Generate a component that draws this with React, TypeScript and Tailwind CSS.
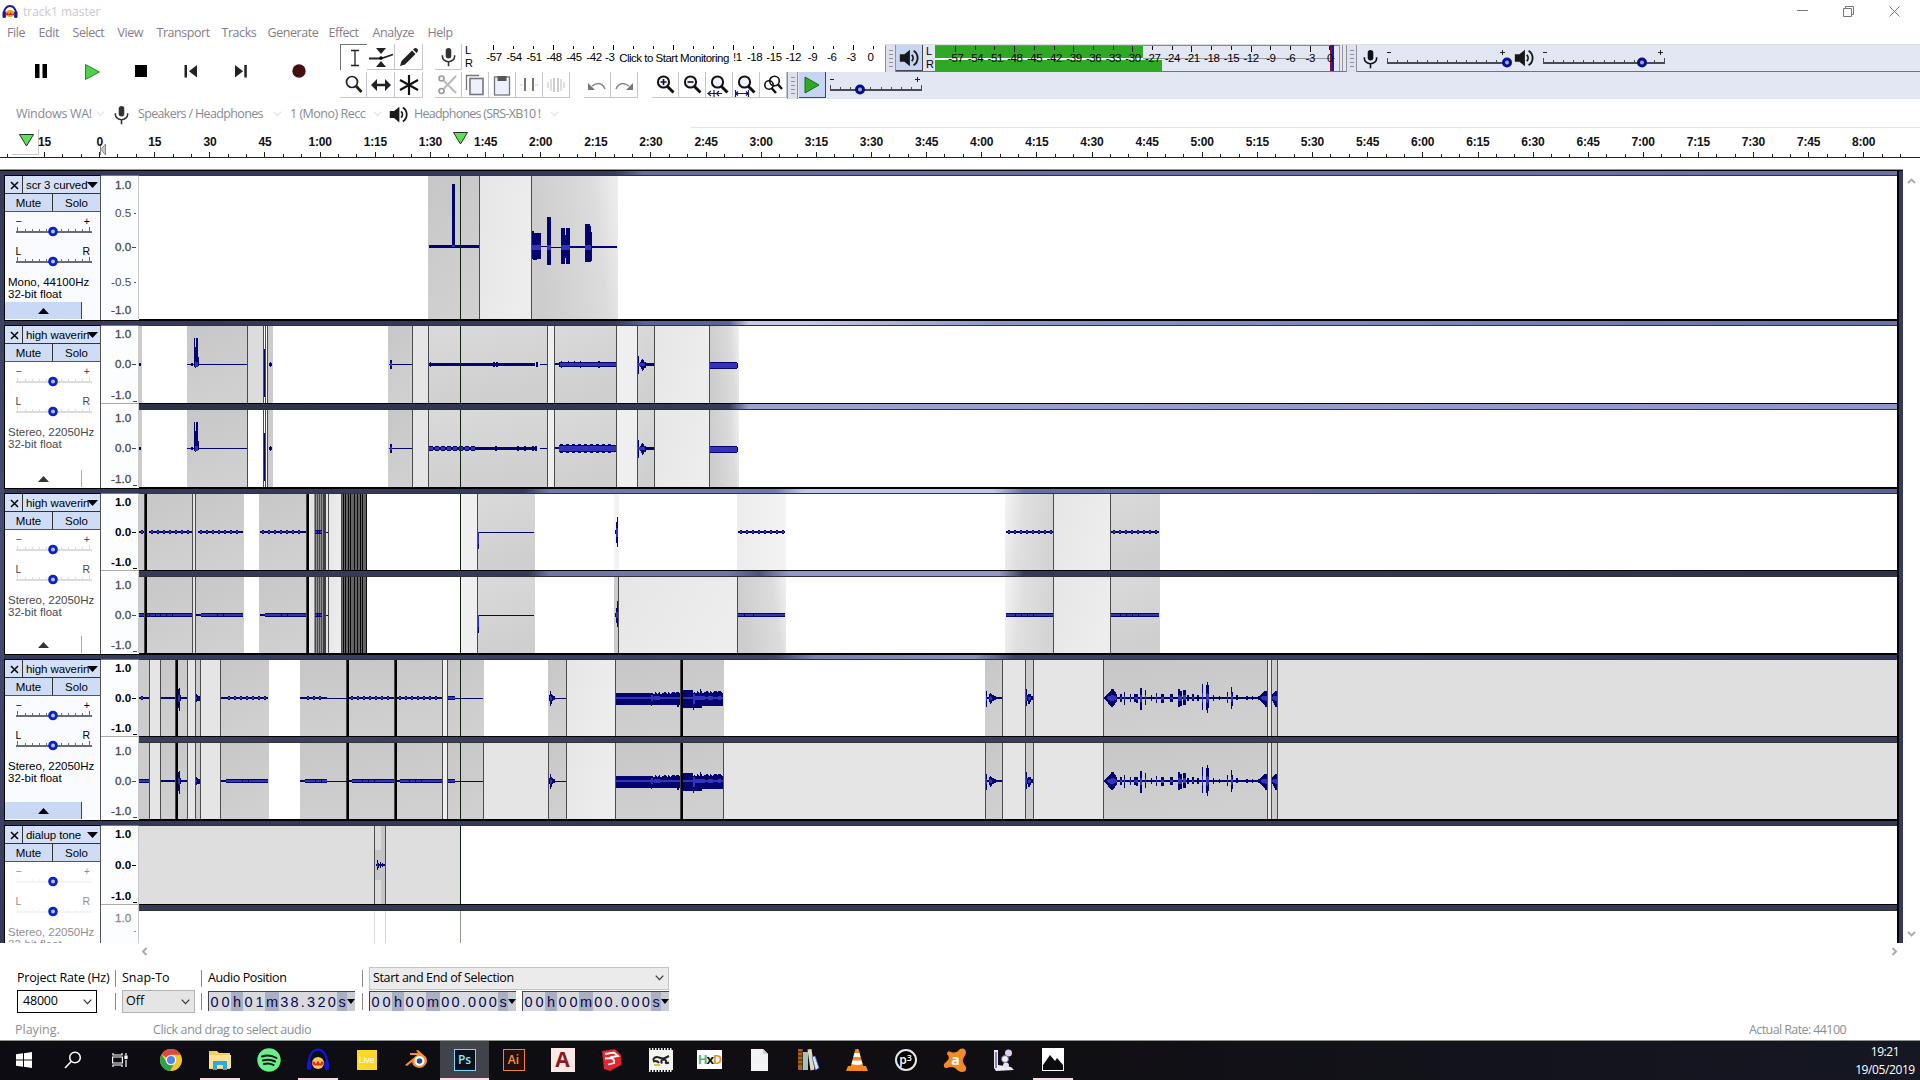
import React from "react";

type Clip = [number, number, string];
type Bar = [number, number, number, number];
interface Wave {
  dark: Bar[];
  rms: Bar[];
}
interface ChannelData {
  h: number;
  c: number;
  clips: Clip[];
  lines: number[];
  black?: number[];
  thick?: number[];
  wave: Wave;
  bold?: boolean;
  faint?: boolean;
  head?: string;
}

const D = "#cccccc";
const L = "#e5e5e5";
const XL = "#efefef";
const LEFT = 139;
const WIDTH = 1758;

/* ---------- waveform builders: y values are relative to the zero line ---------- */
const w = (dark: Bar[] = [], rms: Bar[] = []): Wave => ({ dark, rms });
const join = (...ws: Wave[]): Wave => ({
  dark: ws.flatMap((a) => a.dark),
  rms: ws.flatMap((a) => a.rms),
});
const flat = (x0: number, x1: number, h = 1): Wave => w([[x0, x1, -Math.floor(h / 2), Math.ceil(h / 2)]]);
const beads = (x0: number, x1: number, period = 6): Wave => {
  const out: Wave = flat(x0, x1, 2);
  for (let x = x0 + 2; x < x1 - 2; x += period) {
    out.dark.push([x, x + 2, -2, 2]);
    out.rms.push([x, x + 2, -1, 1]);
  }
  return out;
};
const band = (x0: number, x1: number, up: number, down: number): Wave =>
  w([[x0, x1, -up, down]], [[x0, x1, -up + 1, down - 1]]);
const segBand = (x0: number, x1: number, cuts: number[]): Wave => {
  const b = band(x0, x1, 2, 2);
  cuts.forEach((c) => b.dark.push([c, c + 1, -2, 2]));
  const rms: Bar[] = [];
  let s = x0;
  [...cuts, x1].forEach((c) => {
    rms.push([s, c, -1, 1]);
    s = c + 1;
  });
  return w(b.dark, rms);
};
const spikes = (list: [number, number, number, number][]): Wave => ({
  dark: list.map(([x, wd, u, d]) => [x, x + wd, -u, d] as Bar),
  rms: list.filter((s) => s[2] > 3).map(([x, wd, u, d]) => [x, x + wd, -u / 3, d / 3] as Bar),
});

const voice: Wave = join(
  flat(1104, 1267, 2),
  spikes([
    [1105, 1, 2, 2], [1106, 1, 3, 3], [1107, 1, 4, 4], [1108, 1, 5, 6], [1109, 1, 6, 7], [1110, 1, 7, 8], [1111, 2, 9, 9],
    [1113, 1, 9, 8], [1114, 1, 7, 7], [1115, 1, 6, 5], [1116, 1, 4, 4], [1120, 2, 4, 4], [1124, 1, 6, 7], [1130, 1, 4, 4],
    [1134, 2, 4, 4], [1136, 2, 4, 5], [1140, 2, 10, 12], [1145, 1, 8, 7], [1151, 1, 3, 3], [1156, 1, 5, 5], [1161, 3, 4, 5],
    [1170, 3, 4, 4], [1178, 2, 9, 9], [1180, 2, 7, 8], [1183, 3, 8, 7], [1187, 2, 3, 3], [1192, 2, 4, 3], [1197, 2, 3, 3],
    [1202, 1, 14, 12], [1206, 2, 13, 12], [1207, 1, 16, 15], [1208, 1, 13, 10], [1213, 1, 3, 3], [1219, 1, 2, 2],
    [1227, 1, 6, 5], [1231, 1, 11, 11], [1232, 1, 6, 8], [1236, 2, 3, 2], [1246, 2, 2, 2], [1252, 1, 2, 2],
    [1258, 2, 2, 2], [1260, 1, 3, 3], [1261, 1, 4, 4], [1262, 1, 5, 5], [1263, 1, 6, 6], [1264, 1, 7, 7], [1265, 2, 7, 9],
    [1272, 1, 4, 3], [1273, 1, 5, 5], [1274, 1, 6, 7], [1275, 2, 7, 9],
  ])
);
const chirp = (x: number): Wave =>
  join(flat(x, x + 16, 2), spikes([[x, 1, 7, 9], [x + 3, 1, 4, 4], [x + 4, 1, 5, 6], [x + 5, 1, 4, 5], [x + 6, 2, 3, 3], [x + 8, 2, 2, 2]]));

const jitter = [0, 1, 0, 0, 2, 1, 0, 1, 2, 0, 0, 1, 1, 2, 3, 1, 0, 2, 1, 0, 1, 2, 2, 3, 1, 2, 3, 3, 1, 0];
const loud: Wave = join(
  w(
    [[616, 651, -5, 7], [651, 680, -4, 7], [683, 693, -8, 10], [693, 702, -5, 10], [702, 723, -5, 8], [693, 694, -5, 12], [700, 701, -9, 8], [697, 698, -7, 8], [651, 652, -5, 8], [677, 679, -5, 9]],
    [[616, 680, -1, 1], [683, 723, -1, 1], [651, 653, -3, 3], [654, 660, -2, 2], [693, 695, -4, 6], [695, 705, -2, 2], [708, 713, -2, 2], [718, 721, -2, 2]]
  ),
  w(jitter.map((j, i) => [651 + i, Math.min(652 + i, 680), -4 - Math.min(j, 2), 0] as Bar)),
  w(jitter.map((j, i) => [693 + i, 694 + i, -5 - Math.min(j, 2), 0] as Bar))
);

/* ---------- track 1 ---------- */
const t1: ChannelData = {
  h: 143, c: 71,
  clips: [[428, 479, "url(#dk)"], [480, 531, "url(#lt)"], [532, 618, "url(#fadeR)"]],
  lines: [479, 531],
  wave: w(
    [[429, 479, -2, 1], [452, 455, -63, 0], [532, 534, -16, 12], [534, 541, -14, 12], [533, 537, 11, 13], [541, 547, -1, 0], [547, 551, -30, 18],
      [551, 561, 0, 1], [561, 565, -19, 17], [565, 566, -12, 11], [566, 570, -19, 17], [570, 617, -1, 1], [585, 590, -23, 15], [590, 591, -21, 15], [591, 592, -15, 14]],
    [[452, 455, -2, 0], [532, 541, -2, 3], [547, 551, -2, 3], [561, 570, -2, 3], [585, 591, -2, 3]]
  ),
};

/* ---------- track 2 ---------- */
const t2clips: Clip[] = [
  [139, 142, D], [187, 247, "url(#dk)"], [268, 273, D], [388, 412, "url(#dk)"], [413, 428, L], [429, 547, "url(#dk2)"], [548, 554, XL], [555, 616, "url(#dk2)"],
  [617, 637, XL], [638, 654, "url(#dk2)"], [655, 709, "url(#lt)"], [710, 739, "url(#fadeR)"],
];
const t2lines = [247, 263, 265, 267, 412, 428, 547, 554, 616, 637, 654, 709];
const t2base: Wave = join(
  flat(139, 141, 3), flat(187, 247, 1),
  w([[194, 195, -26, 3], [195, 196, -17, 4], [196, 198, -26, 3], [198, 199, -7, 2], [191, 193, -1, 2], [264, 265, -15, 33], [269, 272, -1, 2], [270, 271, -2, 3]],
    [[195, 198, -2, 3]]),
  flat(389, 412, 1), w([[390, 392, -4, 5]], [[390, 392, -1, 2]]),
  flat(540, 547, 1), flat(555, 560, 2),
  w([[638, 639, -8, 10], [640, 641, -2, 3], [641, 642, -4, 5], [642, 643, -5, 7], [643, 644, -4, 6], [644, 646, -2, 4], [646, 654, -1, 2]], [[638, 645, -1, 2]]),
  w([[710, 737, -2, 5], [737, 738, -1, 4]], [[710, 737, -1, 4]])
);
const t2a: ChannelData = {
  h: 77, c: 38, clips: [...t2clips, [248, 263, "#dcdcdc"]], lines: t2lines,
  wave: join(t2base, flat(429, 535, 3), spikes([[430, 1, 2, 3], [493, 2, 2, 3], [496, 2, 2, 3], [536, 2, 2, 3]]),
    w([[559, 616, -2, 3], [561, 562, -3, 4], [568, 569, -3, 3], [574, 575, -3, 3], [580, 581, -3, 4], [598, 600, -3, 4]], [[560, 616, -1, 2]])),
};
const t2b: ChannelData = {
  h: 77, c: 38, clips: t2clips, lines: t2lines,
  wave: join(t2base, flat(429, 537, 3),
    w([0, 1, 2, 3, 4, 5, 6, 7].map((i) => [429 + i * 6, 433 + i * 6, -2, 3] as Bar), [0, 1, 2, 3, 4, 5, 6, 7].map((i) => [429 + i * 6, 433 + i * 6, -1, 2] as Bar)),
    spikes([[495, 2, 2, 3], [517, 2, 2, 3], [524, 2, 2, 3], [532, 2, 2, 3], [535, 2, 2, 3]]),
    w([[559, 616, -3, 4], ...[0, 1, 2, 3, 4, 5, 6, 7, 8].map((i) => [560 + i * 6, 563 + i * 6, -4, 5] as Bar)], [[559, 616, -2, 3]])),
};

/* ---------- track 3 ---------- */
const dense: Clip[] = [
  [309, 314, L], [314, 326, "#8f8f8f"], [323, 326, "#3f3f3f"], [326, 329, L], [329, 341, "url(#lt)"], [341, 367, "#646464"],
];
const denseLines = [192, 195, 315, 317, 319, 321, 328, 341];
const denseBlack = [343, 345, 348, 350, 354, 357, 360, 362, 366];
const t3left: Clip[] = [[139, 145, D], [147, 193, "url(#dk)"], [193, 196, L], [196, 244, "url(#dk)"], [259, 307, "url(#dk)"], ...dense];
const t3right: Clip[] = [[461, 477, XL], [478, 535, "url(#dk2)"], [1005, 1053, "url(#fadeL)"], [1054, 1110, "url(#lt)"], [1111, 1160, "url(#dk2)"]];
const t3a: ChannelData = {
  h: 76, c: 38, bold: true, clips: [...t3left, ...t3right, [614, 619, "#f2f2f2"], [737, 786, "url(#pale)"]],
  lines: [...denseLines, 477, 1053, 1110], thick: [145, 307], black: denseBlack,
  wave: join(beads(139, 144), beads(149, 192), beads(198, 243), beads(260, 306), segBand(315, 322, [317, 319]), flat(326, 328, 1),
    flat(478, 534, 1), w([[478, 479, 0, 17]], [[478, 479, 0, 12]]), w([[615, 616, -2, 2], [616, 617, -10, 11], [617, 618, -15, 15]], [[616, 618, -4, 5]]),
    beads(738, 785), beads(1006, 1053), beads(1111, 1159)),
};
const t3b: ChannelData = {
  h: 76, c: 38, clips: [...t3left, ...t3right, [614, 618, D], [619, 737, "url(#lt)"], [738, 786, "url(#fadeR)"]],
  lines: [...denseLines, 477, 618, 737, 1053, 1110], thick: [145, 307], black: denseBlack,
  wave: join(segBand(139, 144, []), segBand(147, 192, [149, 155, 160, 166, 172]), flat(196, 201, 2), segBand(201, 243, [217, 223]), flat(260, 265, 2), segBand(265, 306, [281, 287]),
    segBand(315, 322, [317, 319]), flat(326, 328, 1), flat(478, 534, 1), w([[478, 479, 0, 18]], [[478, 479, 0, 12]]),
    w([[615, 616, -2, 2], [616, 617, -7, 8], [617, 618, -14, 12]], [[616, 618, -3, 3]]),
    segBand(738, 785, [744, 753]), segBand(1006, 1053, [1015, 1021, 1027, 1033]), segBand(1111, 1159, [1120, 1126, 1132, 1138])),
};

/* ---------- track 4 ---------- */
const t4clips: Clip[] = [
  [139, 149, D], [150, 160, L], [161, 187, "url(#dk)"], [188, 195, L], [196, 200, D], [201, 220, L], [221, 269, "url(#dk)"],
  [300, 442, "url(#dk)"], [443, 447, XL], [448, 484, "url(#dk)"], [548, 566, "url(#dk)"], [567, 615, "url(#lt)"], [616, 724, "url(#dk)"],
  [985, 1002, "url(#dk)"], [1003, 1025, L], [1026, 1033, D], [1034, 1103, L], [1104, 1267, "url(#dk)"], [1268, 1271, L], [1272, 1277, D], [1278, 1897, "#dfdfdf"],
];
const t4lines = [149, 160, 187, 195, 200, 220, 442, 447, 566, 615, 1002, 1025, 1033, 1103, 1267, 1271, 1277];
const t4thick = [176, 347, 395, 681];
const t4common: Wave = join(
  flat(161, 175, 2), flat(178, 187, 2), spikes([[178, 1, 9, 10], [179, 1, 10, 13], [180, 1, 3, 3], [196, 1, 4, 4], [197, 1, 3, 3], [198, 2, 2, 3]]),
  flat(327, 347, 1), segBand(448, 455, []), flat(455, 483, 1), flat(549, 566, 1),
  spikes([[549, 1, 3, 3], [550, 1, 7, 8], [551, 1, 4, 6], [552, 1, 3, 3], [553, 2, 2, 2]]),
  loud, chirp(986), spikes([[1026, 1, 9, 8], [1027, 1, 3, 3], [1028, 2, 4, 6], [1030, 1, 4, 4], [1031, 2, 2, 2]]), voice
);
const t4a: ChannelData = {
  h: 76, c: 38, bold: true, clips: t4clips, lines: t4lines, thick: t4thick,
  wave: join(t4common, beads(139, 149), beads(226, 268), flat(221, 227, 2), beads(305, 327), flat(300, 306, 2), beads(349, 394), beads(397, 442)),
};
const t4b: ChannelData = {
  h: 76, c: 38, clips: [...t4clips, [484, 548, "#e5e5e5"], [724, 985, "#e5e5e5"]], lines: [...t4lines, 483, 548, 723, 985], thick: t4thick,
  wave: join(t4common, segBand(139, 149, []), segBand(226, 268, [242, 248]), flat(221, 227, 2), segBand(305, 327, [315, 321]), flat(300, 306, 2),
    flat(349, 353, 2), segBand(352, 394, [362, 368, 374]), flat(397, 400, 2), segBand(400, 442, [409, 415, 421])),
};

/* ---------- track 5 ---------- */
const t5a: ChannelData = {
  h: 78, c: 39, bold: true,
  clips: [[139, 374, "#dedede"], [375, 381, "#dadada"], [381, 385, "#c4c4c4"], [375, 381, "mid"], [386, 461, "#dedede"]],
  lines: [374, 385],
  wave: join(flat(376, 385, 2), spikes([[377, 1, 5, 5], [378, 1, 2, 3], [380, 1, 3, 3], [382, 1, 2, 2]])),
};
const t5b: ChannelData = { h: 32, c: 39, faint: true, clips: [[374, 375, "#dddddd"], [385, 386, "#d4d4d4"]], lines: [], wave: w(), head: "#8b9a8b" };

function barsToPath(bars: Bar[]) {
  return bars.map(([x0, x1, y0, y1]) => `M${x0} ${y0}H${x1}V${y1}H${x0}Z`).join("");
}

function Channel({ d }: { d: ChannelData }) {
  const top = -d.c;
  return (
    <svg width={WIDTH} height={d.h} viewBox={`${LEFT} ${top} ${WIDTH} ${d.h}`} shapeRendering="crispEdges" className="block bg-white">
      {d.clips.map(([a, b, fill], i) =>
        fill === "mid" ? (
          <rect key={i} x={a} y={-15} width={b - a} height={30} fill="#c6c6c6" />
        ) : (
          <rect key={i} x={a} y={top} width={b - a} height={d.h} fill={fill} />
        )
      )}
      {d.lines.map((x) => <rect key={x} x={x} y={top} width={1} height={d.h} fill="#4c4c4c" />)}
      {(d.black ?? []).map((x) => <rect key={x} x={x} y={top} width={1} height={d.h} fill="#0a0a0a" />)}
      {(d.thick ?? []).map((x) => (
        <g key={x}>
          <rect x={x - 1} y={top} width={3} height={d.h} fill="#444" />
          <rect x={x} y={top} width={2} height={d.h} fill="#000" />
        </g>
      ))}
      <path d={barsToPath(d.wave.dark)} fill="#04046e" />
      <path d={barsToPath(d.wave.rms)} fill="#3434b8" />
      <rect x={460} y={top} width={1} height={d.h} fill={d.head ?? "#0a2410"} />
    </svg>
  );
}

function Defs() {
  return (
    <svg width="0" height="0" className="absolute">
      <defs>
        <linearGradient id="dk" x1="0" y1="0" x2="0.3" y2="1"><stop offset="0" stopColor="#c7c7c7" /><stop offset="1" stopColor="#d0d0d0" /></linearGradient>
        <linearGradient id="dk2" x1="0" y1="0" x2="0.3" y2="1"><stop offset="0" stopColor="#dadada" /><stop offset="1" stopColor="#cfcfcf" /></linearGradient>
        <linearGradient id="lt" x1="0" y1="0" x2="1" y2="0.4"><stop offset="0" stopColor="#e6e6e6" /><stop offset="1" stopColor="#ededed" /></linearGradient>
        <linearGradient id="pale" x1="0" y1="0" x2="1" y2="0"><stop offset="0" stopColor="#ececec" /><stop offset="1" stopColor="#f3f3f3" /></linearGradient>
        <linearGradient id="fadeR" x1="0" y1="0.2" x2="1" y2="0"><stop offset="0" stopColor="#cdcdcd" /><stop offset="0.7" stopColor="#dcdcdc" /><stop offset="1" stopColor="#f0f0f0" /></linearGradient>
        <linearGradient id="fadeL" x1="1" y1="0.2" x2="0" y2="0"><stop offset="0" stopColor="#d4d4d4" /><stop offset="0.6" stopColor="#e0e0e0" /><stop offset="1" stopColor="#f4f4f4" /></linearGradient>
      </defs>
    </svg>
  );
}

function VRuler({ d, tall }: { d: ChannelData; tall?: boolean }) {
  const tone = d.faint ? "text-[#8a8a8a]" : d.bold ? "text-black" : "text-[#484848]";
  return (
    <svg width={38} height={d.h} viewBox={`101 0 38 ${d.h}`} className={`block border-r border-[#c8c8c8] bg-[#fcfdff] ${tone}`}>
      <g fill="currentColor" fontFamily="Liberation Sans, sans-serif" fontSize="12" textAnchor="end" fontWeight={d.bold ? "bold" : "normal"} stroke="currentColor" strokeWidth={d.bold ? 0 : 0.3}>
        <text x="132" y={tall ? 11.5 : 11}>1.0</text>
        {tall && <text x="132" y="40" strokeWidth="0">0.5</text>}
        {!d.faint && <text x="132" y={d.c + 4.5}>0.0</text>}
        {tall && <text x="132" y="111.500" strokeWidth="0">-0.5</text>}
        {!d.faint && <text x="132" y={d.h - 3.5}>-1.0</text>}
      </g>
      <g fill="currentColor" shapeRendering="crispEdges">
        {!d.faint && <rect x="133" y={d.c} width="4" height="1" />}
        <rect x="135" y={d.c - (tall ? 35 : 19)} width="2" height="1" />
        {!d.faint && <rect x="135" y={d.c + (tall ? 36 : 19)} width="2" height="1" />}
        {!d.faint && !tall && <rect x="134" y={d.h - 1} width="4" height="1" />}
      </g>
    </svg>
  );
}

function PanSlider({ l, r, tone, dim }: { l: string; r: string; tone: string; dim: string }) {
  return (
    <svg width={95} height={30} viewBox="5 1 95 30" className={tone}>
      <g fill="currentColor" fontFamily="Liberation Sans, sans-serif" fontSize="10.5">
        <text x="15.5" y="13.5">{l}</text>
        <text x="90" y="13.5" textAnchor="end">{r}</text>
      </g>
      <g className={dim} fill="currentColor" shapeRendering="crispEdges">
        <rect x="16" y="20" width="76" height="2" />
        {[17, 25, 32, 39, 46, 61, 68, 75, 82, 89].map((x) => (
          <rect key={x} x={x} y={x === 17 || x === 89 ? 16 : 18} width="1" height={x === 17 || x === 89 ? 4 : 2} />
        ))}
      </g>
      <circle cx="53" cy="20.5" r="3.4" fill="#b9c3dc" stroke="#0a20c8" strokeWidth="2.8" />
    </svg>
  );
}

function Panel({ name, fmt, style, h, footer }: { name: string; fmt: string; style: "full" | "wash" | "faint"; h: number; footer?: boolean }) {
  const tone = style === "full" ? "text-black" : style === "wash" ? "text-[#4a4a4a]" : "text-[#909090]";
  const dim = style === "full" ? "text-[#6c6c6c]" : style === "wash" ? "text-[#dcdcdc]" : "text-[#f4f4f4]";
  const heights: Record<number, string> = { 145: "h-[145px]", 163: "h-[163px]", 161: "h-[161px]", 118: "h-[118px]" };
  return (
    <div className={`flex w-[97px] shrink-0 flex-col overflow-hidden border-x border-l-black border-r-[#555] border-t border-t-black font-['Liberation_Sans',sans-serif] text-[12px] ${heights[h]} ${style === "full" ? "bg-[#f9fbff]" : "bg-white"}`}>
      <div className="flex h-[18px] shrink-0 border-b border-[#333] bg-[#d4e0f8]">
        <div className="flex w-[18px] items-center justify-center border-r border-[#333] pl-[2px] pt-px">
          <svg width="9" height="9" viewBox="0 0 9 9"><path d="M1 1L8 8M8 1L1 8" stroke="#000" strokeWidth="1.5" /></svg>
        </div>
        <div className="flex flex-1 items-center overflow-hidden pl-[3px] pr-[2px] pt-px">
          <span className="w-[61px] overflow-visible whitespace-nowrap text-[11.5px] leading-[17px] tracking-[-0.1px]">
            <span className="block w-[63px] overflow-hidden">{name}</span>
          </span>
          <svg width="11" height="7" viewBox="0 0 11 7" className="shrink-0"><path d="M0 0H11L5.5 6Z" /></svg>
        </div>
      </div>
      <div className="flex h-[18px] shrink-0 border-b border-[#555] bg-[#cfdcf6] text-[11.5px] leading-[19px]">
        <div className="w-[48px] border-r border-[#333] text-center">Mute</div>
        <div className="flex-1 text-center">Solo</div>
      </div>
      <div className="flex shrink-0 flex-col">
        <PanSlider l="−" r="+" tone={tone} dim={dim} />
        <PanSlider l="L" r="R" tone={tone} dim={dim} />
      </div>
      <div className={`mt-[4px] pl-[3px] text-[11.5px] leading-[12px] whitespace-nowrap ${tone}`}>
        <div>{fmt}</div>
        <div>32-bit float</div>
      </div>
      {h !== 118 && (
        <div className={`mt-auto mb-[1px] flex h-[17px] w-[77px] items-center justify-center border-r ${footer ? "border-[#444] bg-[#c9d8f5]" : "border-[#aaa]"}`}>
          <svg width="11" height="6" viewBox="0 0 11 6"><path d="M0 6H11L5.5 0Z" fill={footer ? "#000" : "#333"} /></svg>
        </div>
      )}
    </div>
  );
}

function Track(props: { name: string; fmt: string; style: "full" | "wash" | "faint"; h: number; footer?: boolean; channels: ChannelData[]; gap?: string; last?: boolean }) {
  const { channels, gap, last } = props;
  return (
    <div className="flex shrink-0">
      <Panel {...props} />
      <div className="flex w-[38px] shrink-0 flex-col bg-[#fcfdff]">
        <div className="h-px bg-[#777]" />
        <VRuler d={channels[0]} tall={channels[0].h > 100} />
        {channels[1] && (
          <>
            <div className="h-px bg-[#aaa]" />
            <div className="h-[6px] border-r border-[#c8c8c8] bg-white" />
            <VRuler d={channels[1]} />
          </>
        )}
      </div>
      <div className="flex flex-col">
        <div className="h-px bg-[#333]" />
        <Channel d={channels[0]} />
        {channels[1] && (
          <>
            <div className="h-px bg-black" />
            <div className={`h-[5px] ${gap}`} />
            <div className="h-px bg-[#333]" />
            <Channel d={channels[1]} />
          </>
        )}
        {!last && <div className="h-px bg-black" />}
      </div>
    </div>
  );
}

/* ---------- toolbar pieces ---------- */
function Mic({ s = 24, c = "#222" }: { s?: number; c?: string }) {
  return (
    <svg width={s} height={s} viewBox="0 0 24 24" fill="none" stroke={c} strokeWidth="1.8">
      <rect x="8.8" y="2.2" width="6.4" height="12" rx="3.2" fill={c} stroke="none" />
      <path d="M5 10.5V12a7 6 0 0 0 14 0V10.5M12 18V23" />
    </svg>
  );
}
function Speaker({ s = 24 }: { s?: number }) {
  return (
    <svg width={s} height={s} viewBox="0 0 24 24" fill="none" stroke="#181818" strokeWidth="2">
      <path d="M2 8H7L13 3V21L7 16H2Z" fill="#181818" stroke="none" />
      <path d="M15 8.5a5 5 0 0 1 0 7M17 4a9.5 9.5 0 0 1 0 16" />
    </svg>
  );
}
function Cell({ children, active, wide }: { children?: React.ReactNode; active?: boolean; wide?: boolean }) {
  return (
    <div className={`flex h-[26px] shrink-0 items-center justify-center ${wide ? "w-[28px]" : "w-[27px]"} ${active ? "border-l border-t border-[#70727c]" : "border-b border-r border-[#c4c6cf]"}`}>
      {children}
    </div>
  );
}
function Mag({ inner, below }: { inner?: React.ReactNode; below?: React.ReactNode }) {
  return (
    <svg width="24" height="24" viewBox="0 0 24 24" fill="none" stroke="#111" strokeWidth="2">
      <circle cx="10.5" cy="9" r="5.6" fill="#eef2ff" />
      <path d="M14.5 13.5L20.5 19.5" strokeWidth="3" />
      {inner}
      {below}
    </svg>
  );
}
function Grip() {
  return (
    <div className="flex h-[27px] w-[11px] shrink-0 flex-col items-center justify-center gap-[3px] border-x border-[#8e909a] bg-[#dfe2ec]">
      {[0, 1, 2, 3, 4].map((i) => <div key={i} className="h-px w-[4px] bg-[#8e909a]" />)}
    </div>
  );
}
function HSlider({ width, knob }: { width: number; knob: number }) {
  const n = Math.round((width - 3) / 10);
  return (
    <svg width={width + 12} height="26" viewBox={`-6 0 ${width + 12} 26`}>
      <g fill="#222" shapeRendering="crispEdges">
        <rect x="0" y="7" width="4" height="1" />
        <rect x={width - 7} y="7" width="5" height="1" />
        <rect x={width - 5} y="5" width="1" height="5" />
        <rect x="0" y="17" width={width} height="2" fill="#4a4b50" />
        {Array.from({ length: n + 1 }, (_, i) => (
          <rect key={i} x={Math.round((i * (width - 1)) / n)} y={i === 0 || i === n ? 13 : 15} width="1" height={i === 0 || i === n ? 4 : 2} fill="#4a4b50" />
        ))}
      </g>
      <circle cx={knob} cy="17.5" r="3.5" fill="#a0a8cc" stroke="#06108c" strokeWidth="3" />
    </svg>
  );
}
function Chev({ c = "#ccc" }: { c?: string }) {
  return <svg width="9" height="6" viewBox="0 0 9 6" fill="none" stroke={c} strokeWidth="1.2" className="shrink-0"><path d="M.7 .7L4.5 4.6L8.3 .7" /></svg>;
}

const menus: [string, string][] = [
  ["File", "w-[31.5px]"], ["Edit", "w-[34px]"], ["Select", "w-[45px]"], ["View", "w-[39px]"], ["Transport", "w-[65px]"], ["Tracks", "w-[46px]"],
  ["Generate", "w-[61px]"], ["Effect", "w-[44px]"], ["Analyze", "w-[55px]"], ["Help", "w-[40px]"],
];
const recDb = ["-57", "-54", "-51", "-48", "-45", "-42"];
const recDb2 = ["-18", "-15", "-12", "-9", "-6", "-3", "0"];
const playDb = [57, 54, 51, 48, 45, 42, 39, 36, 33, 30, 27, 24, 21, 18, 15, 12, 9, 6, 3, 0];
const times = Array.from({ length: 34 }, (_, i) => {
  const s = (i - 1) * 15;
  const a = Math.abs(s);
  return a < 60 ? `${a}` : `${Math.floor(a / 60)}:${String(a % 60).padStart(2, "0")}`;
});

function Header() {
  return (
    <>
      <div className="flex h-[23px] shrink-0 items-center pl-[2px] text-[12px] text-[#cfc6d0]">
        <svg width="16" height="15" viewBox="0 0 16 15">
          <path d="M2 9A6 7 0 0 1 14 9" fill="none" stroke="#1a1aa0" strokeWidth="2" />
          <ellipse cx="8" cy="9.5" rx="4.6" ry="3.6" fill="#f5a010" />
          <path d="M4 10L5.5 8.5L7 10.5L8.5 8L10 10.5L12 9.5V11H4Z" fill="#d82010" />
          <rect x="0.5" y="7" width="3.4" height="7" rx="1.6" fill="#1a1aa0" />
          <rect x="12.1" y="7" width="3.4" height="7" rx="1.6" fill="#1a1aa0" />
        </svg>
        <span className="ml-[5px] pt-px">track1 master</span>
        <div className="ml-auto flex items-center gap-[35px] pr-[20px]">
          <svg width="11" height="11" viewBox="0 0 11 11"><path d="M0 4.5H11" stroke="#777" /></svg>
          <svg width="11" height="11" viewBox="0 0 11 11" fill="none" stroke="#777"><path d="M.5 2.5H8.5V10.5H.5ZM2.5 2.5V.5H10.5V8.5H8.5" /></svg>
          <svg width="11" height="11" viewBox="0 0 11 11" fill="none" stroke="#777"><path d="M.5 .5L10.5 10.5M10.5 .5L.5 10.5" /></svg>
        </div>
      </div>
      <div className="flex h-[20px] shrink-0 items-center pl-[7px] pt-px text-[12.5px] tracking-[-0.45px] text-[#857d88]">
        {menus.map(([m, cls]) => <div key={m} className={`${cls} shrink-0 whitespace-nowrap`}>{m}</div>)}
      </div>
    </>
  );
}

function Transport() {
  return (
    <div className="flex w-[340px] shrink-0 items-center">
      <svg width="340" height="56" viewBox="0 0 340 56">
        <path d="M35 21H39.5V35H35ZM42.5 21H47V35H42.5Z" fill="#000" />
        <path d="M85.5 21.500V36.500L99.5 29Z" fill="#4fd04a" stroke="#2a8a2a" />
        <rect x="135" y="22" width="12" height="12" />
        <path d="M184.500 22H187V34.500H184.500ZM197 22V34.500L189 28.300Z" fill="#222" />
        <path d="M246.800 22H244.300V34.500H246.800ZM235 22V34.500L243 28.300Z" fill="#222" />
        <circle cx="299" cy="28" r="6.700" fill="#431012" />
      </svg>
    </div>
  );
}

function ToolRows() {
  return (
    <div className="flex flex-1 flex-col pt-px">
      <div className="flex h-[29px]">
        <Cell active><svg width="14" height="18" viewBox="0 0 14 18" fill="none" stroke="#222" strokeWidth="1.3" className="ml-[2px]"><path d="M3 1.500H11M3 16.500H11M7 1.500V16.500" /></svg></Cell>
        <Cell wide><svg width="26" height="22" viewBox="0 0 26 22"><path d="M1 12.500H13L25 8.500" fill="none" stroke="#222" strokeWidth="1.800" /><path d="M8 2H18L13 8ZM8 21H18L13 15Z" fill="#222" /><circle cx="13" cy="12" r="1.700" /></svg></Cell>
        <Cell wide><svg width="20" height="20" viewBox="0 0 20 20"><path d="M1 19L2.500 14L13 3.500L16.500 7L6 17.500ZM14 2.500L15.500 1.200Q17 .5 18.500 2Q19.500 3.500 18.500 4.800L17.500 6Z" fill="#222" /></svg></Cell>
        <div className="w-[12px] shrink-0" />
        <Cell><Mic s={21} c="#333" /></Cell>
        <div className="flex w-[22px] flex-col pl-[3px] font-['Liberation_Sans',sans-serif] text-[11px] leading-[13px] text-black"><span>L</span><span>R</span></div>
        <div className="flex w-[401px] shrink-0 flex-col font-['Liberation_Sans',sans-serif] text-[11.5px] tracking-[-0.4px] text-black">
          <div className="flex h-[6px] shrink-0">
            {Array.from({ length: 39 }, (_, i) => (
              <div key={i} className="w-[10px] shrink-0 pl-[9px]"><div className={i % 2 ? "h-0" : i % 6 === 0 ? "mt-px h-[5px] w-px bg-black" : "mt-[2px] h-[3px] w-px bg-black"} /></div>
            ))}
          </div>
          <div className="flex h-[16px] items-center">
            {recDb.map((v) => <div key={v + "a"} className="w-[20px] shrink-0 text-center">{v}</div>)}
            <div className="w-[11px] shrink-0 pl-px">-3</div>
            <div className="mt-px w-[118px] shrink-0 text-center text-[11.500px] tracking-[-0.500px] whitespace-nowrap">Click to Start Monitoring</div>
            <div className="w-[12px] shrink-0 text-left">!1</div>
            {recDb2.map((v) => <div key={v} className="w-[19.300px] shrink-0 text-center">{v}</div>)}
          </div>
        </div>
        <div className="flex h-[28px] flex-1 items-start border-b border-t border-b-[#70727c] border-t-[#dcdde0] bg-[#e3e6f3]">
          <Grip />
          <div className="flex h-[26px] w-[27px] items-center justify-center border-b border-r border-[#445] bg-[#c5d5f2]"><Speaker s={22} /></div>
          <div className="flex w-[12px] flex-col pl-[3px] font-['Liberation_Sans',sans-serif] text-[11px] leading-[13px] text-black"><span>L</span><span>R</span></div>
          <div className="grid h-[26px] w-[401px] shrink-0">
            <div className="col-start-1 row-start-1 flex flex-col gap-[2px] border-t border-[#888]">
              <div className="h-[12px] w-[208px] bg-[#2fa824]" />
              <div className="h-[12px] w-[227px] bg-[#2fa824]" />
            </div>
            <svg className="col-start-1 row-start-1" width="401" height="26" viewBox="0 0 401 26" shapeRendering="crispEdges">
              <rect x="0" y="12.500" width="208" height="2" fill="#f4f6ff" />
              <rect x="208" y="13" width="192" height="1" fill="#999" />
              {playDb.map((v, i) => <rect key={v} x={20 + i * 19.700} y="1" width="1" height={i % 3 === 0 ? 6 : 4} fill="#111" />)}
              <rect x="395" y="0" width="2" height="26" fill="#8a0a20" />
              <rect x="397" y="0" width="2" height="26" fill="#1818b0" />
            </svg>
            <div className="col-start-1 row-start-1 flex items-center pl-[11px] font-['Liberation_Sans',sans-serif] text-[11.5px] tracking-[-0.4px] text-black">
              {playDb.map((v) => <div key={v} className="w-[19.700px] shrink-0 text-center">{v ? `-${v}` : "0"}</div>)}
            </div>
          </div>
          <div className="ml-[3px] h-[26px] w-[4px] border-x border-[#999]" />
          <div className="ml-[3px]"><Grip /></div>
          <div className="ml-[3px] mt-[3px]"><Mic s={21} c="#111" /></div>
          <div className="ml-0"><HSlider width={120} knob={120} /></div>
          <div className="ml-0 mt-[2px]"><Speaker s={22} /></div>
          <div className="ml-[2px]"><HSlider width={122} knob={99} /></div>
        </div>
      </div>
      <div className="flex h-[27px]">
        <Cell><svg width="22" height="22" viewBox="0 0 22 22" fill="none" stroke="#222" strokeWidth="1.700" className="ml-[2px]"><circle cx="9" cy="8" r="5.500" /><path d="M13 12L18.500 18" strokeWidth="2.800" /></svg></Cell>
        <Cell wide><svg width="20" height="12" viewBox="0 0 20 12"><path d="M0 6L6 0V4.800H14V0L20 6L14 12V7.200H6V12Z" fill="#222" /></svg></Cell>
        <Cell wide><svg width="20" height="20" viewBox="0 0 20 20" stroke="#111" strokeWidth="2.200"><path d="M10 0V20M1 5L19 15M19 5L1 15" /></svg></Cell>
        <div className="w-[12px] shrink-0" />
        <Cell><svg width="20" height="20" viewBox="0 0 20 20" fill="none" stroke="#9a9a9e" strokeWidth="1.600"><circle cx="3.500" cy="3.500" r="2.500" /><circle cx="3.500" cy="16" r="2.500" /><path d="M5.500 5.500L18 18M5.500 14L18 1" strokeWidth="2" stroke="#bbb" /></svg></Cell>
        <Cell><svg width="20" height="22" viewBox="0 0 20 22" fill="none" stroke="#75757b" strokeWidth="1.300"><path d="M1.500 16V1.500H14" /><rect x="5" y="4.500" width="13" height="16" fill="#edf1fd" strokeWidth="1.600" /></svg></Cell>
        <Cell><svg width="18" height="22" viewBox="0 0 18 22" fill="none" stroke="#75757b" strokeWidth="1.300"><rect x="1.500" y="3" width="15" height="18" fill="#edf1fd" /><path d="M4.500 2H13.500V7H4.500Z" fill="#555" stroke="none" /></svg></Cell>
        <Cell><svg width="20" height="16" viewBox="0 0 20 16" stroke="#555" strokeWidth="1.600"><path d="M6 1V14M14 1V14" /><path d="M1 8H4M16 8H19" stroke="#e0e0e0" /></svg></Cell>
        <Cell><svg width="20" height="16" viewBox="0 0 20 16" stroke="#cacaca" strokeWidth="1.200"><path d="M2 5V11M5 2V14M15 2V14M18 5V11" /><path d="M8 1V15M12 1V15" stroke="#a8a8a8" /></svg></Cell>
        <div className="w-[14px] shrink-0" />
        <Cell><svg width="20" height="12" viewBox="0 0 20 12" fill="none" stroke="#85858a" strokeWidth="1.500"><path d="M18 10Q14 1 5 7" /><path d="M1 4V11H8Z" fill="#777" stroke="none" /></svg></Cell>
        <Cell><svg width="20" height="12" viewBox="0 0 20 12" fill="none" stroke="#85858a" strokeWidth="1.500"><path d="M2 10Q6 1 15 7" /><path d="M19 4V11H12Z" fill="#777" stroke="none" /></svg></Cell>
        <div className="w-[14px] shrink-0" />
        <Cell><Mag inner={<path d="M10.500 6V12M7.500 9H13.500" strokeWidth="1.600" />} /></Cell>
        <Cell><Mag inner={<path d="M7.500 9H13.500" strokeWidth="1.600" />} /></Cell>
        <Cell><Mag below={<path d="M1 20.500H15M4 18L1 20.500L4 23M12 18L9.500 20.500L12 23M7 17V24" stroke="#1a1a60" strokeWidth="1.200" />} /></Cell>
        <Cell><Mag below={<path d="M1 20.500H15M1.500 17V24M14.500 17V24M4 18.500L2 20.500L4 22.500M12 18.500L14 20.500L12 22.500" stroke="#1a1a60" strokeWidth="1.200" />} /></Cell>
        <Cell><svg width="22" height="22" viewBox="0 0 22 22" fill="none" stroke="#111" strokeWidth="1.600"><circle cx="7" cy="11" r="4.200" /><circle cx="12.500" cy="7" r="4.800" /><path d="M9.500 14L14 19M16 10.500L20 15" strokeWidth="2.400" /></svg></Cell>
        <div className="flex h-[27px] flex-1 items-start bg-[#e3e6f3]">
          <Grip />
          <div className="ml-[1px] flex h-[26px] w-[27px] items-center justify-center border-b border-r border-[#445] bg-[#c5d5f2]">
            <svg width="16" height="18" viewBox="0 0 16 18"><path d="M1 1V17L15 9Z" fill="#2fa824" stroke="#1b6a1b" /></svg>
          </div>
          <div className="-ml-[2px]"><HSlider width={92} knob={30} /></div>
        </div>
      </div>
    </div>
  );
}

function DeviceBar() {
  return (
    <div className="flex h-[28px] shrink-0 items-center pt-[2px] text-[12.500px] whitespace-nowrap text-[#858b90]">
      <div className="ml-[16px] w-[76px] tracking-[-0.300px]">Windows WA!</div>
      <div className="ml-[4px]"><Chev c="#e2e2e2" /></div>
      <div className="ml-[6px] h-[21px] w-[21px]"><Mic s={21} c="#333" /></div>
      <div className="ml-[6px] w-[126px] tracking-[-0.650px]">Speakers / Headphones</div>
      <div className="ml-[9px]"><Chev c="#e2e2e2" /></div>
      <div className="ml-[8px] w-[80px] tracking-[-0.500px]">1 (Mono) Recc</div>
      <div className="ml-[3px]"><Chev c="#e2e2e2" /></div>
      <div className="ml-[6px]"><Speaker s={21} /></div>
      <div className="ml-[5px] w-[132px] tracking-[-0.750px]">Headphones (SRS-XB10 !</div>
      <div className="ml-[4px]"><Chev c="#e2e2e2" /></div>
    </div>
  );
}

function Timeline() {
  const ticks = Array.from({ length: 104 }, (_, i) => ({ x: 99 + (i - 5) * 18.380, major: (i - 5) % 3 === 0 }));
  return (
    <div className="grid h-[31px] shrink-0 border-b border-[#222] bg-white">
      <svg className="col-start-1 row-start-1" width="1920" height="30" viewBox="0 127 1920 30">
        <path d="M690 127.500H1920" stroke="#e6e6ea" />
        <path d="M38.500 129V154.500H12" fill="none" stroke="#c8c8d0" />
        <path d="M19.500 134.500H33.500L26.500 146Z" fill="#5fe05a" stroke="#223322" />
        <path d="M453.500 132.500H467.500L460.500 144Z" fill="#5fe05a" stroke="#223322" />
        <g shapeRendering="crispEdges">
          {ticks.filter((t) => t.x < 12 || t.x > 40).map((t) => <rect key={t.x} x={Math.round(t.x)} y={t.major ? 152 : 154} width="1" height={t.major ? 5 : 3} fill="#222" />)}
        </g>
        <path d="M100.500 144V155M105.500 144V155L101 149.500Z" fill="#c8c8c8" stroke="#888" />
      </svg>
      <div className="col-start-1 row-start-1 flex pl-[17px] pt-[7px] font-['Liberation_Sans',sans-serif] text-[12px] leading-[16px] font-bold tracking-[-0.200px] text-[#111]">
        {times.map((t, i) => <div key={i} className="w-[55.140px] shrink-0 text-center">{t}</div>)}
      </div>
    </div>
  );
}

function Tracks() {
  return (
    <div className="flex h-[774px] shrink-0 overflow-hidden">
      <div className="flex w-[1903px] flex-col border-t border-[#999] bg-[#343a58]">
        <div className="h-px shrink-0 bg-black" />
        <div className="flex">
          <div className="w-[4px] shrink-0 bg-linear-to-b from-[#343a58] via-[#474e78] to-[#343a58]" />
          <div className="flex w-[1893px] flex-col">
            <div className="h-[4px] shrink-0 bg-[linear-gradient(to_right,#343a58_0px,#343a58_610px,#666ea0_640px,#6a72a6_1893px)]" />
            <Track name="scr 3 curved" fmt="Mono, 44100Hz" style="full" h={145} footer channels={[t1]} />
            <div className="h-px shrink-0 bg-black" />
            <div className="h-[4px] shrink-0 bg-[linear-gradient(to_right,#343a58_0px,#343a58_610px,#5a6496_640px,#5a6496_725px,#c4cae8_745px,#c4cae8_800px,#8f97c6_1000px,#6a72a6_1893px)]" />
            <Track name="high waverin" fmt="Stereo, 22050Hz" style="wash" h={163} channels={[t2a, t2b]} gap="bg-[linear-gradient(to_right,#2c3248_0px,#343a58_590px,#9aa2d0_610px,#8f96c8_1759px)]" />
            <div className="h-px shrink-0 bg-black" />
            <div className="h-[4px] shrink-0 bg-[linear-gradient(to_right,#343a58_0px,#343a58_520px,#7078ac_545px,#7078ac_770px,#c0c8e8_800px,#c0c8e8_990px,#6870a4_1020px,#5a6294_1893px)]" />
            <Track name="high waverin" fmt="Stereo, 22050Hz" style="wash" h={161} channels={[t3a, t3b]} gap="bg-[linear-gradient(to_right,#343a58_0px,#343a58_390px,#6e76aa_410px,#6e76aa_590px,#4c5280_620px,#9498c8_650px,#9498c8_860px,#343a58_885px,#2c3248_1759px)]" />
            <div className="h-px shrink-0 bg-black" />
            <div className="h-[4px] shrink-0 bg-[linear-gradient(to_right,#343a58_0px,#3c4264_770px,#7880b0_810px,#8890bc_970px,#3c4264_1010px,#343a58_1893px)]" />
            <Track name="high waverin" fmt="Stereo, 22050Hz" style="full" h={161} footer channels={[t4a, t4b]} gap="bg-[#383e5e]" />
            <div className="h-px shrink-0 bg-black" />
            <div className="h-[4px] shrink-0 bg-[#343a56]" />
            <Track name="dialup tone" fmt="Stereo, 22050Hz" style="faint" h={118} channels={[t5a, t5b]} gap="bg-[#343a56]" last />
          </div>
          <div className="w-[2px] shrink-0 bg-black" />
          <div className="w-[4px] shrink-0 bg-[#343a58]" />
        </div>
      </div>
      <div className="flex flex-1 flex-col items-center justify-between pt-[9px] pb-[6px]">
        <svg width="9" height="6" viewBox="0 0 9 6" fill="none" stroke="#aaa" strokeWidth="1.800"><path d="M1 5L4.500 1.500L8 5" /></svg>
        <svg width="9" height="6" viewBox="0 0 9 6" fill="none" stroke="#aaa" strokeWidth="1.800"><path d="M1 1L4.500 4.500L8 1" /></svg>
      </div>
    </div>
  );
}

function TimeBox({ h, m, s }: { h: string; m: string; s: string }) {
  const digit = "flex items-center justify-around bg-[#d9dade] h-full";
  const unit = "flex items-center justify-center h-full bg-[#aab0c2]";
  return (
    <div className="flex h-[20px] w-[147px] items-center border-l border-t border-[#444] bg-[#aab0c2] font-['Liberation_Sans',sans-serif] text-[14.500px] leading-[18px] text-[#080850]">
      <div className={`${digit} w-[22px]`}>{h.split("").map((c, i) => <span key={i}>{c}</span>)}</div>
      <div className={`${unit} w-[12px]`}>h</div>
      <div className={`${digit} w-[22px]`}>{m.split("").map((c, i) => <span key={i}>{c}</span>)}</div>
      <div className={`${unit} w-[14px]`}>m</div>
      <div className={`${digit} w-[58px]`}>{s.split("").map((c, i) => <span key={i}>{c}</span>)}</div>
      <div className={`${unit} w-[10px]`}>s</div>
      <div className="flex h-full w-[8px] items-center bg-[#c8cad4]"><svg width="8" height="5" viewBox="0 0 8 5"><path d="M0 0H8L4 5Z" /></svg></div>
    </div>
  );
}

function SelectionBar() {
  const sep = "w-px shrink-0 h-[17px] bg-[#8a8a8a]";
  return (
    <div className="flex h-[76px] shrink-0 flex-col text-[12.500px] text-black">
      <div className="flex h-[23px] shrink-0 justify-between pl-[141px] pr-[22px] pt-[4px]">
        <svg width="7" height="9" viewBox="0 0 7 9" fill="none" stroke="#aaa" strokeWidth="2"><path d="M5.500 1L2 4.500L5.500 8" /></svg>
        <svg width="7" height="9" viewBox="0 0 7 9" fill="none" stroke="#aaa" strokeWidth="2"><path d="M1.500 1L5 4.500L1.500 8" /></svg>
      </div>
      <div className="flex h-[24px] shrink-0 items-center pl-[17px] whitespace-nowrap">
        <div className="w-[98px] tracking-[-0.200px]">Project Rate (Hz)</div>
        <div className={sep} />
        <div className="w-[79px] pl-[6px]">Snap-To</div>
        <div className={`${sep} ml-[6px]`} />
        <div className="w-[154px] pl-[6px] tracking-[-0.400px]">Audio Position</div>
        <div className={`${sep} ml-[6px]`} />
        <div className="ml-[6px] flex h-[23px] w-[300px] items-center justify-between border border-[#c4c4c4] bg-[#ebebeb] pl-[3px] pr-[4px] tracking-[-0.350px]">
          Start and End of Selection<Chev c="#333" />
        </div>
      </div>
      <div className="flex h-[24px] shrink-0 items-start pl-[17px]">
        <div className="flex h-[23px] w-[80px] items-center justify-between border border-black bg-white pl-[5px] pr-[4px] tracking-[-0.200px]">48000<Chev c="#333" /></div>
        <div className={`${sep} mt-[3px] ml-[18px]`} />
        <div className="ml-[6px] flex h-[23px] w-[73px] items-center justify-between border border-[#b4b4b4] bg-[#e5e5e5] pl-[3px] pr-[4px]">Off<Chev c="#333" /></div>
        <div className={`${sep} mt-[3px] ml-[6px]`} />
        <div className="mt-px ml-[6px]"><TimeBox h="00" m="01" s="38.320" /></div>
        <div className={`${sep} mt-[3px] ml-[7px]`} />
        <div className="mt-px ml-[6px]"><TimeBox h="00" m="00" s="00.000" /></div>
        <div className="mt-px ml-[6px]"><TimeBox h="00" m="00" s="00.000" /></div>
      </div>
    </div>
  );
}

function Tile({ children, active, open }: { children: React.ReactNode; active?: boolean; open?: boolean }) {
  return (
    <div className={`flex h-[39px] w-[49px] shrink-0 flex-col items-center justify-between ${active ? "bg-[#40434a]" : ""}`}>
      <div className="flex h-[39px] items-center justify-center">{children}</div>
      <div className={`h-[2px] shrink-0 ${active ? "w-full bg-[#f8dce4]" : open ? "w-[40px] bg-[#f8dce4]" : "w-0"}`} />
    </div>
  );
}

function Taskbar() {
  const S = ({ children }: { children: React.ReactNode }) => <svg width="24" height="24" viewBox="0 0 24 24">{children}</svg>;
  return (
    <div className="flex h-[40px] shrink-0 border-t border-[#8d9490] bg-linear-to-r from-[#0c0c12] via-[#100e12] to-[#151723] font-['Open_Sans',sans-serif]">
      <div className="-ml-px flex">
        <Tile><svg width="16" height="16" viewBox="0 0 16 16" fill="#fff"><path d="M0 2.300L7 1.300V7.500H0ZM8 1.200L16 0V7.500H8ZM0 8.500H7V14.700L0 13.700ZM8 8.500H16V16L8 14.800Z" /></svg></Tile>
        <Tile><svg width="18" height="18" viewBox="0 0 18 18" fill="none" stroke="#fff" strokeWidth="1.500"><circle cx="11" cy="6.500" r="5.300" /><path d="M7.200 10.500L1 17" /></svg></Tile>
        <Tile><svg width="16" height="16" viewBox="0 0 16 16" fill="none" stroke="#fff" strokeWidth="1.200" className="-ml-[4px]"><path d="M1 1V3H10V1M1 15V13H10V15M.6 5H10.400V11H.6ZM14 1V3M14 8V15" /><rect x="13" y="4" width="2" height="2.500" fill="#fff" /></svg></Tile>
        <Tile>
          <S>
            <circle cx="12" cy="12" r="11" fill="#f4c52c" />
            <path d="M12 12L2.500 6.500A11 11 0 0 1 21.600 6.800H12Z" fill="#dd4b3e" />
            <path d="M2.500 6.500A11 11 0 0 0 11 23L15.500 15Q12 18 8 15Z" fill="#2ba24c" />
            <circle cx="12" cy="12" r="5.200" fill="#fff" /><circle cx="12" cy="12" r="4" fill="#4b87ee" />
          </S>
        </Tile>
        <Tile open>
          <S>
            <path d="M1 3H9L11 5H22V21H1Z" fill="#f5cf60" /><path d="M1 7H23V20H1Z" fill="#fde38f" /><path d="M5 13H19V22H15V17H9V22H5Z" fill="#2fa8e6" />
          </S>
        </Tile>
        <Tile>
          <S>
            <circle cx="12" cy="12" r="11.700" fill="#69f08a" />
            <path d="M5 8.500Q12.500 6 19.500 10M6 12.500Q12.500 10.500 18 13.500M7 16Q12 14.500 16.500 17" fill="none" stroke="#0c1410" strokeWidth="2" strokeLinecap="round" />
          </S>
        </Tile>
        <Tile open>
          <S>
            <path d="M3 15C3 -3 21 -3 21 15" fill="none" stroke="#1414e0" strokeWidth="2.200" />
            <ellipse cx="12" cy="15" rx="6" ry="6" fill="#f8c860" /><path d="M6 15L8 13L10 16L12 12.500L14 16L16 13L18 15L16 17.500H8Z" fill="#e03010" />
            <rect x="1" y="13" width="4.500" height="9" rx="2" fill="#1414e0" /><rect x="18.500" y="13" width="4.500" height="9" rx="2" fill="#1414e0" />
          </S>
        </Tile>
        <Tile><div className="flex h-[20px] w-[20px] items-center justify-center bg-[#fbd825] text-[9px] tracking-[-0.300px] text-white">Live</div></Tile>
        <Tile>
          <S>
            <path d="M1 17L13 7H6V5H14L12 2.500L14 2L22 9Q25 15 19 19Q13 21.500 9 17L8 14L3 18Z" fill="#f29033" />
            <circle cx="15.500" cy="13" r="5" fill="#fff" /><circle cx="15.500" cy="13" r="2.800" fill="#1f4f86" />
          </S>
        </Tile>
        <Tile active><div className="flex h-[22px] w-[22px] items-center justify-center border border-[#7fd4f5] bg-[#06131c] text-[12px] font-semibold text-[#9fe0fa]">Ps</div></Tile>
        <Tile><div className="flex h-[22px] w-[22px] items-center justify-center border border-[#e8853a] bg-[#241006] text-[12px] font-semibold text-[#f59245]">Ai</div></Tile>
        <Tile><div className="flex h-[24px] w-[24px] items-center justify-center bg-[#fbe7e3] text-[21px] font-bold text-[#8a1a22]">A</div></Tile>
        <Tile>
          <S>
            <path d="M2 3L15 1L21 7V17L10 23L4 21Z" fill="#e0262e" />
            <path d="M5 6L14 4.500L18 8L10 9.500M5 10.500L12 10L14 12V15L8 16.500" fill="none" stroke="#fff" strokeWidth="1.800" />
          </S>
        </Tile>
        <Tile>
          <S>
            <rect x="0" y="2" width="24" height="20" fill="#f4f4f0" /><path d="M0 1.500H24M0 22.500H24" stroke="#f4f4f0" strokeWidth="3" strokeDasharray="1.500 1.500" />
            <path d="M4 12Q6 8 10 9.500T16 10L20 8M4 13.500Q8 12 10 15M13 15.500Q11 12 14.500 11.500Q18 12 17 14T20 14.500" fill="none" stroke="#222" strokeWidth="2" /><path d="M5 17H11" stroke="#e0c030" strokeWidth="2" />
          </S>
        </Tile>
        <Tile>
          <div className="flex h-[19px] w-[25px] items-center justify-center bg-white text-[13px] leading-none font-bold tracking-[-1.200px]">
            <span className="text-[#56b878]">H</span><span className="text-[#111]">x</span><span className="text-[#e89a28]">D</span>
          </div>
        </Tile>
        <Tile><S><path d="M4 1H16L21 6V23H4Z" fill="#f2f2f4" /><path d="M16 1V6H21" fill="#cfd0d4" /></S></Tile>
        <Tile>
          <S>
            <rect x="2" y="1" width="4.500" height="21" fill="#a8601c" /><path d="M2 4H6.500M2 8H6.500M2 12H6.500M2 16H6.500" stroke="#3a1c08" strokeWidth="1.200" />
            <rect x="7" y="4" width="5" height="18" fill="#9cc6c6" /><path d="M11.500 1.500L15.500 1L18.500 21.500L14.500 22.500Z" fill="#e6d9b4" /><path d="M16 9L19 8L23 20L19.500 22Z" fill="#dbe8fc" stroke="#3a6ad0" strokeWidth=".8" />
          </S>
        </Tile>
        <Tile>
          <S>
            <path d="M3 18H21L23 23H1Z" fill="#f28a1c" /><path d="M10.500 1H13.500L18.500 19Q12 22 5.500 19Z" fill="#f28a1c" />
            <path d="M9.500 5H14.500L15.500 9H8.500ZM7.500 12.500H16.500L17.500 16Q12 18 6.500 16Z" fill="#fff" />
          </S>
        </Tile>
        <Tile><div className="flex h-[22px] w-[22px] items-center justify-center rounded-full border-2 border-[#e8e8e8] bg-black text-[12px] font-semibold text-white">p<span className="-mt-[4px] text-[9px]">3</span></div></Tile>
        <Tile>
          <svg width="24" height="24" viewBox="0 0 24 24">
            <path d="M8 4Q13 6 17 1Q22 -1 23 4Q23 7 20 11Q19 14 23 19Q24 24 19 24Q16 24 12 20Q8 18 4 20Q0 20 1 16L5 12Q7 9 4 6Q4 2 8 4Z" fill="#f28c28" />
            <text x="12.500" y="17" textAnchor="middle" fontFamily="Open Sans, sans-serif" fontWeight="bold" fontSize="14" fill="#fff">a</text>
          </svg>
        </Tile>
        <Tile>
          <S>
            <path d="M2 2H6V17L19 19L22 22L4 23L2 20Z" fill="#eeeaf8" /><circle cx="16.500" cy="5" r="3.500" fill="#d9d2ea" /><circle cx="13" cy="11" r="3.500" fill="#f2f0f8" stroke="#7a5aa8" /><circle cx="14" cy="17.500" r="3" fill="#e8e2f4" />
            <path d="M4 4V20" stroke="#5a4a98" strokeWidth="1.300" />
          </S>
        </Tile>
        <Tile open><svg width="22" height="23" viewBox="0 0 22 23"><rect width="22" height="23" fill="#fff" /><path d="M1 17L8 7L13 13L15 10L21 17V22H1Z" fill="#0c0c10" /></svg></Tile>
      </div>
      <div className="ml-auto flex w-[70px] flex-col items-center pt-[1.500px] text-[12px] leading-[18px] tracking-[-0.400px] text-white"><span>19:21</span><span>19/05/2019</span></div>
    </div>
  );
}

export default function App() {
  return (
    <div className="flex h-[1080px] w-[1920px] flex-col overflow-hidden bg-white font-['Open_Sans',sans-serif]">
      <Defs />
      <Header />
      <div className="flex h-[56px] shrink-0"><Transport /><ToolRows /></div>
      <DeviceBar />
      <Timeline />
      <div className="h-[11px] shrink-0" />
      <Tracks />
      <SelectionBar />
      <div className="flex h-[21px] shrink-0 items-center pt-[2px] pl-[15px] pr-[74px] text-[12.500px] whitespace-nowrap text-[#8a9094]">
        <div className="w-[138px]">Playing.</div>
        <div className="tracking-[-0.400px]">Click and drag to select audio</div>
        <div className="ml-auto tracking-[-0.600px]">Actual Rate: 44100</div>
      </div>
      <Taskbar />
    </div>
  );
}
